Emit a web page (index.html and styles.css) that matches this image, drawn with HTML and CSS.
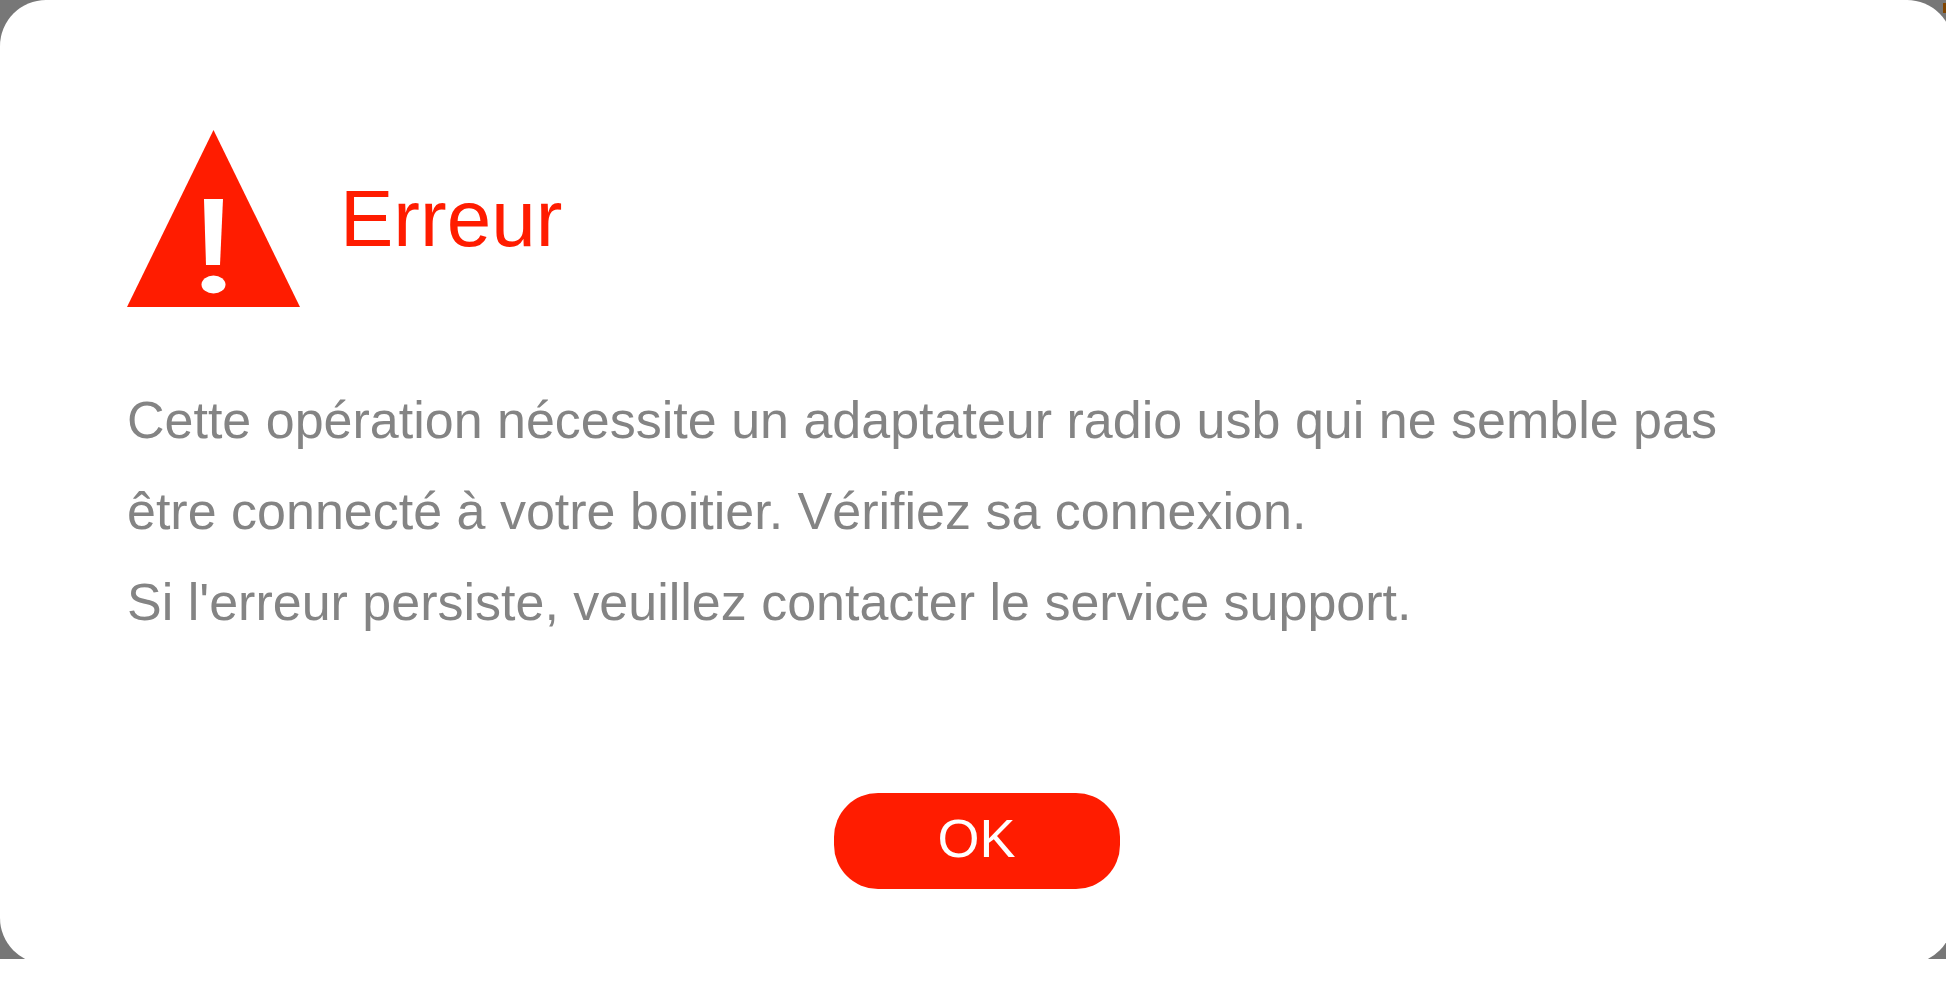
FILE: index.html
```
<!DOCTYPE html>
<html lang="fr">
<head>
<meta charset="UTF-8" />
<title>Erreur</title>
<link rel="stylesheet" href="styles.css">
</head>
<body>
  <div class="overlay">
    <span class="page-mark"></span>
    <div class="dialog" role="alertdialog" aria-labelledby="title" aria-describedby="message">
      <div class="header">
        <svg class="warning" viewBox="0 0 173 177" aria-hidden="true">
          <path fill="#ff1c00" d="M86.500 0L173 177H0Z" />
          <path fill="#fff" d="M77 69H96L93 135H79Z" />
          <ellipse fill="#fff" cx="86.500" cy="154.500" rx="12" ry="9" />
        </svg>
        <h1 id="title">Erreur</h1>
      </div>
      <p id="message" class="message">
        Cette opération nécessite un adaptateur radio usb qui ne semble pas<br>
        être connecté à votre boitier. Vérifiez sa connexion.<br>
        Si l'erreur persiste, veuillez contacter le service support.
      </p>
      <button class="ok" type="button">OK</button>
    </div>
  </div>
</body>
</html>
```
FILE: styles.css
```
* {
  box-sizing: border-box;
}
body {
  margin: 0;
  min-height: 100vh;
  padding-bottom: 26px;
  background: #fff;
  font-family: "Liberation Sans", Arial, sans-serif;
  display: flex;
}
.overlay {
  flex: 1;
  display: flex;
  position: relative;
  overflow: hidden;
  background: #777;
}
.page-mark {
  position: absolute;
  top: 3px;
  right: 0;
  width: 3px;
  height: 10px;
  background: #804400;
}
/* the dialog runs slightly past the right and bottom edges */
.dialog {
  flex: 1;
  display: flex;
  flex-direction: column;
  margin: 0 -7px -5px 0;
  padding: 130px 127px 75px;
  background: #fff;
  border-radius: 46px;
  position: relative;
}
.header {
  display: flex;
  align-items: center;
  gap: 40px;
}
.warning {
  width: 173px;
  height: 177px;
}
h1 {
  margin: 0;
  font-size: 80px;
  font-weight: normal;
  line-height: 110px;
  color: #ff1c00;
}
.message {
  margin: 68px 0 0;
  font-size: 52px;
  line-height: 91px;
  color: #848484;
}
.ok {
  align-self: center;
  margin-top: auto;
  width: 286px;
  height: 96px;
  border: none;
  border-radius: 44px;
  background: #ff1c00;
  color: #fff;
  font-family: inherit;
  font-size: 54px;
  padding: 0 0 6px;
  cursor: pointer;
}
```
